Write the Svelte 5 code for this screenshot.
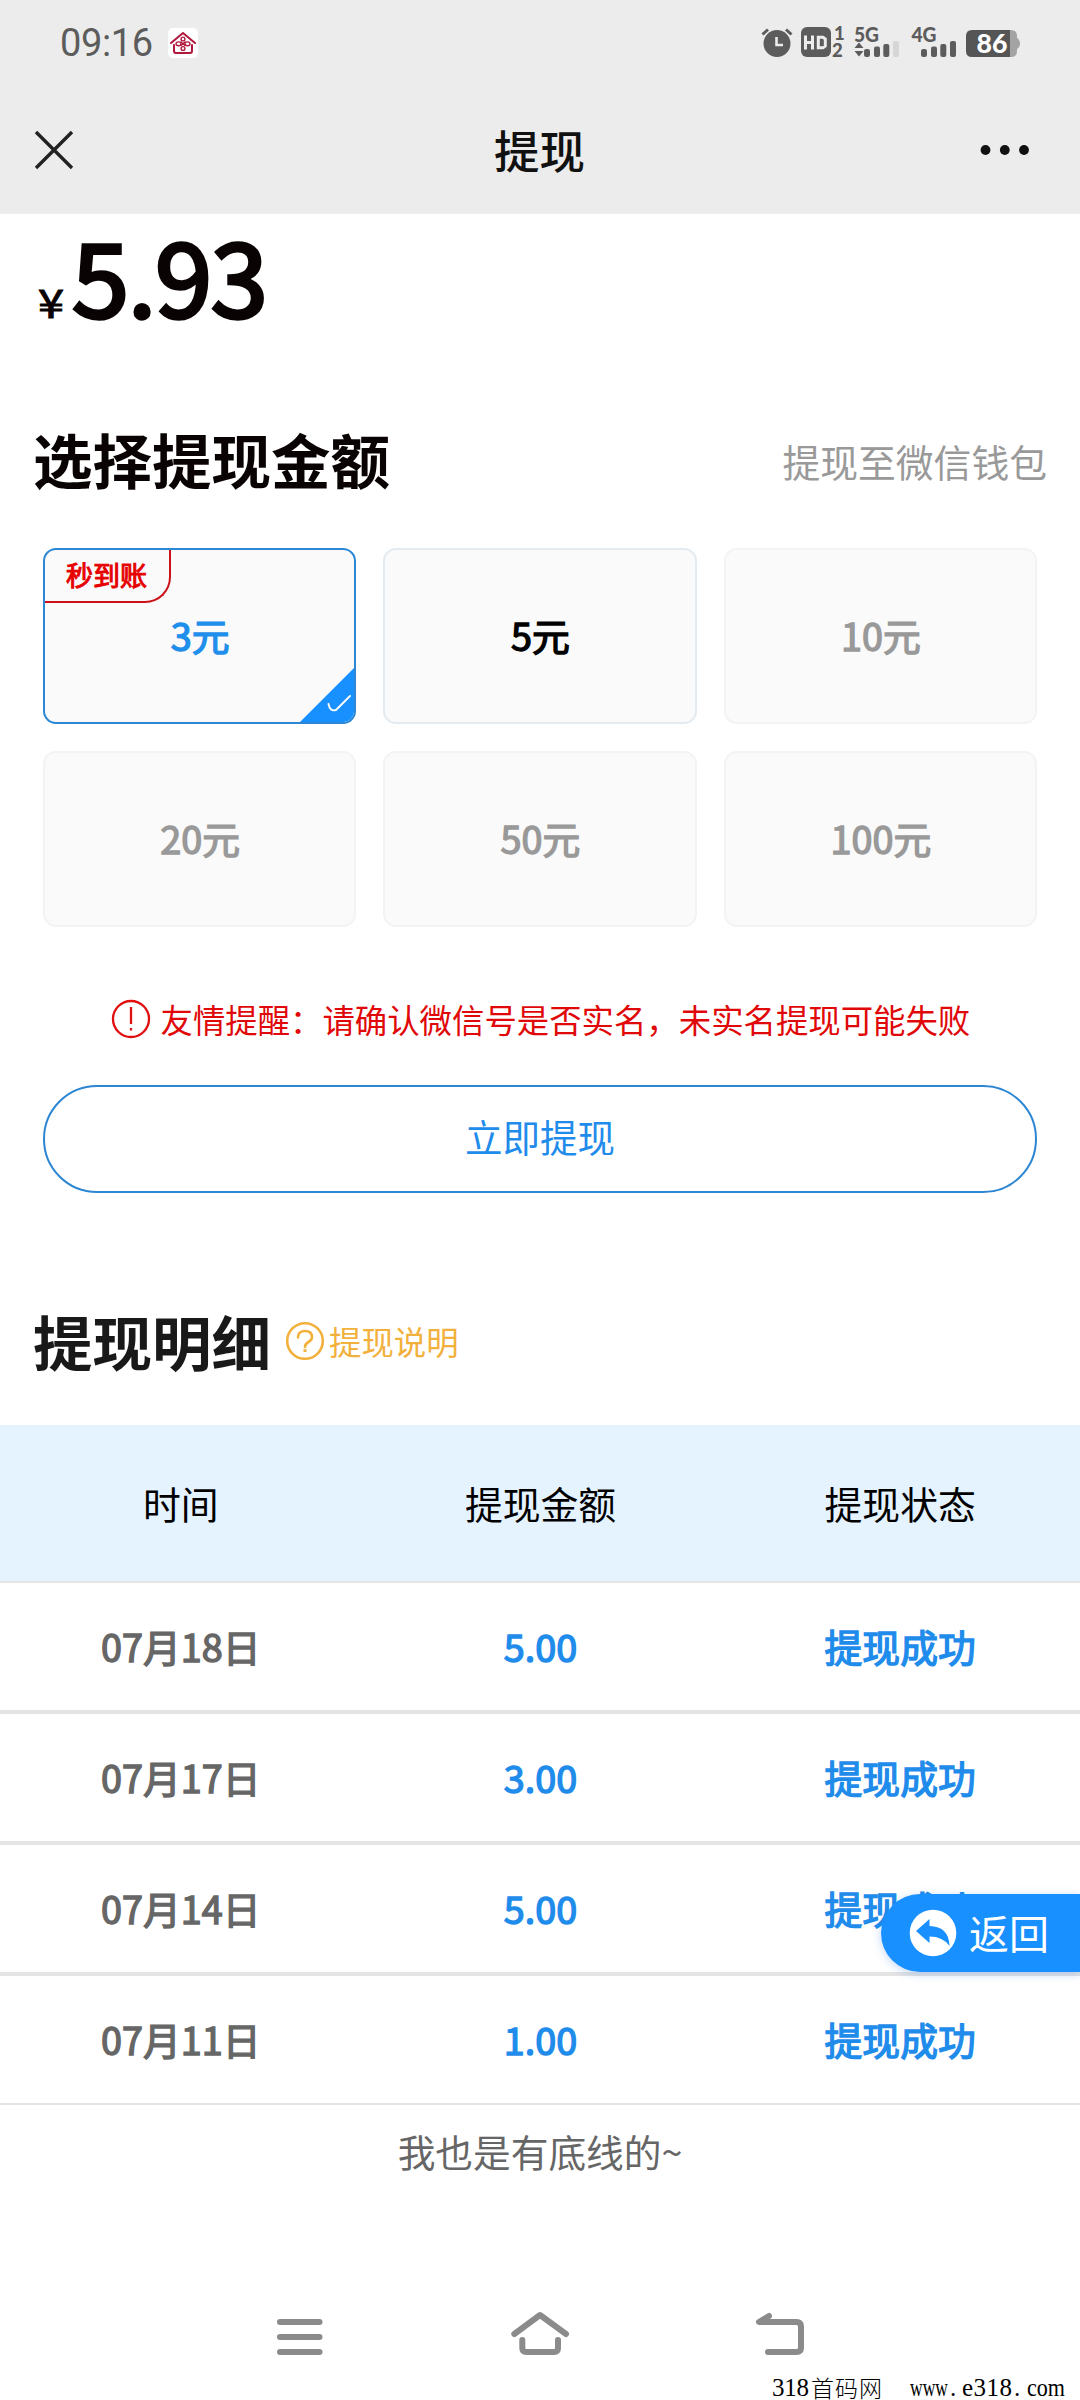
<script>
  const amounts = [
    { label: '3元', state: 'selected', badge: '秒到账' },
    { label: '5元', state: 'open' },
    { label: '10元', state: 'off' },
    { label: '20元', state: 'off' },
    { label: '50元', state: 'off' },
    { label: '100元', state: 'off' }
  ];
  const records = [
    { date: '07月18日', amount: '5.00', status: '提现成功' },
    { date: '07月17日', amount: '3.00', status: '提现成功' },
    { date: '07月14日', amount: '5.00', status: '提现成功' },
    { date: '07月11日', amount: '1.00', status: '提现成功' }
  ];
</script>

<div class="screen">
  <header>
    <div class="status">
      <span class="clock">09:16</span>
      <svg class="app" width="32" height="32" viewBox="0 0 32 32">
        <rect x="1" y="1" width="30" height="30" rx="5" fill="#fff" />
        <g fill="none" stroke="#b0183c" stroke-width="2" stroke-linejoin="round" stroke-linecap="round">
          <path d="M4 16 L16 6 L28 16" />
          <path d="M7 18 V24 Q7 26 9 26 H23 Q25 26 25 24 V18" />
          <g stroke-width="1.4">
            <circle cx="16" cy="12" r="1.9" />
            <circle cx="16" cy="21.5" r="1.9" />
            <ellipse cx="11.5" cy="16.8" rx="2.5" ry="1.9" />
            <ellipse cx="20.5" cy="16.8" rx="2.5" ry="1.9" />
            <path d="M14 15 L18 18.6 M18 15 L14 18.6" />
          </g>
        </g>
      </svg>
      <svg class="sys" width="262" height="46" viewBox="760 20 262 46">
        <g fill="#5c5c5c">
          <circle cx="777" cy="43.5" r="13.5" />
          <path d="M762.5 34.5 L768 29.5 M791.5 34.5 L786 29.5" stroke="#5c5c5c" stroke-width="3" />
          <path d="M776.5 37 V45 H783" fill="none" stroke="#ececec" stroke-width="2.6" />
          <rect x="801" y="27" width="30" height="30" rx="6" />
          <path d="M805.5 35.5 V49.500 M812.5 35.500 V49.500 M805.5 42.5 H812.5 M818.3 37.3 H823 L825.3 39 V46 L823 47.7 H818.3 Z" fill="none" stroke="#ececec" stroke-width="3" />
          <text x="834" y="40" class="g" font-size="18.5">1</text>
          <text x="832" y="56.5" class="g" font-size="18.5">2</text>
          <text x="854" y="41.8" class="g" font-size="20.5" textLength="25" lengthAdjust="spacingAndGlyphs">5G</text>
          <text x="911.5" y="41.8" class="g" font-size="20.5" textLength="25" lengthAdjust="spacingAndGlyphs">4G</text>
          <path d="M854.5 48 L859 42.5 L863.5 48 Z M854.5 51 H863.5 L859 56.5 Z" />
          <rect x="864" y="49" width="6" height="8" rx="2.2" />
          <rect x="874" y="46.5" width="6" height="10.5" rx="2" />
          <rect x="883.3" y="44" width="6" height="13" rx="2" />
          <rect x="893" y="41" width="6" height="16" rx="2" fill="#d6d6d6" />
          <rect x="921" y="49" width="6" height="8" rx="2.2" />
          <rect x="931" y="46.5" width="6" height="10.5" rx="2" />
          <rect x="940.3" y="44" width="6" height="13" rx="2" />
          <rect x="950" y="41" width="6" height="16" rx="2" />
          <path d="M1009 30 H1011 Q1017 30 1017 36 V38 Q1020 40 1020 43.5 Q1020 47 1017 49 V51 Q1017 57 1011 57 H1009 Z" fill="#a3a3a3" />
          <path d="M972 30 H1010 V57 H972 Q966 57 966 51 V36 Q966 30 972 30 Z" fill="#555" />
        </g>
        <text x="976.5" y="53" class="g" font-size="26.5" fill="#fff" textLength="31" lengthAdjust="spacingAndGlyphs">86</text>
      </svg>
    </div>
    <div class="bar">
      <svg width="40" height="40" viewBox="0 0 40 40"><path d="M2 2 L38 38 M38 2 L2 38" fill="none" stroke="#222" stroke-width="3.4" /></svg>
      <h1>提现</h1>
      <svg width="50" height="12" viewBox="0 0 50 12" fill="#111"><circle cx="5.5" cy="6" r="4.9" /><circle cx="24.8" cy="6" r="4.9" /><circle cx="44" cy="6" r="4.9" /></svg>
    </div>
  </header>

  <section class="balance"><span class="yen">¥</span><span class="num">5.93</span></section>

  <section class="title">
    <h2>选择提现金额</h2>
    <span class="to">提现至微信钱包</span>
  </section>

  <section class="grid">
    {#each amounts as a}
      <div class="card {a.state}">
        {a.label}
        {#if a.badge}<span class="badge">{a.badge}</span>{/if}
        {#if a.state === 'selected'}
          <svg class="tick" width="56" height="56" viewBox="0 0 56 56">
            <path d="M56 0 V56 H0 Z" fill="#1890ff" />
            <path d="M29.5 37 Q31 45 37 43 L51 29" fill="none" stroke="#fff" stroke-width="1.9" stroke-linecap="round" stroke-linejoin="round" />
          </svg>
        {/if}
      </div>
    {/each}
  </section>

  <p class="notice">
    <svg width="40" height="40" viewBox="0 0 40 40" fill="none" stroke="#e01010" stroke-width="2.3">
      <circle cx="20" cy="20" r="18" /><path d="M20 8 V25 M20 29 V31.5" />
    </svg>
    <span>友情提醒：请确认微信号是否实名，未实名提现可能失败</span>
  </p>

  <button>立即提现</button>

  <section class="detail">
    <h2>提现明细</h2>
    <svg width="40" height="40" viewBox="0 0 40 40" fill="none" stroke="#f2b13c" stroke-width="2.6">
      <circle cx="20" cy="20" r="17.8" />
      <path d="M13 16.5 Q13 10 20 10 Q27 10 27 16 Q27 19 23.5 21 Q20 23 20 26" stroke-linecap="round" /><path d="M20 28.2 V31" stroke-width="3" />
    </svg>
    <span>提现说明</span>
  </section>

  <div class="table">
    <div class="row head"><span>时间</span><span>提现金额</span><span>提现状态</span></div>
    {#each records as r}
      <div class="row"><span class="date">{r.date}</span><span>{r.amount}</span><span>{r.status}</span></div>
    {/each}
  </div>

  <p class="end">我也是有底线的~</p>

  <nav>
    <svg width="60" height="50" viewBox="270 2308 60 50"><path d="M280 2322 H319.5 M280 2337 H319.5 M280 2352 H319.5" /></svg>
    <svg width="64" height="50" viewBox="508 2308 64 50"><path d="M514.3 2334 L540 2315 L566 2334 M522.3 2340 V2348 Q522.3 2352 526.5 2352 H554 Q558 2352 558 2348 V2340" /></svg>
    <svg width="60" height="50" viewBox="750 2308 60 50"><path d="M769 2316 L759 2322 H796.5 Q801 2322 801 2326.5 V2347.5 Q801 2352 796.5 2352 H768" /></svg>
  </nav>

  <div class="back">
    <svg width="48" height="48" viewBox="0 0 48 48">
      <circle cx="24" cy="24" r="23.3" fill="#fff" />
      <path d="M7 22 L20.5 10 V17 Q40 17.5 40.5 37 Q34 27.5 20.5 27.5 V34 Z" fill="#1890ff" />
    </svg>
    <span>返回</span>
  </div>

  <svg class="mark" width="300" height="34" viewBox="770 2366 300 34">
    <text x="772" y="2396" textLength="37">318</text>
    <text x="811" y="2397" class="cn" textLength="71">首码网</text>
    <text x="910" y="2396" textLength="38" lengthAdjust="spacingAndGlyphs">www</text>
    <text x="950" y="2396">.</text>
    <text x="962" y="2396" textLength="50">e318</text>
    <text x="1014" y="2396">.</text>
    <text x="1027" y="2396" textLength="38" lengthAdjust="spacingAndGlyphs">com</text>
  </svg>
</div>

<style>
  :global(body) { margin: 0; background: #fff; }
  .screen {
    position: relative;
    box-sizing: border-box;
    width: 1080px;
    height: 2400px;
    overflow: hidden;
    background: #fff;
    font-family: 'Noto Sans CJK SC', sans-serif;
    color: #000;
  }
  h1, h2, p { margin: 0; }
  svg { display: block; flex: none; overflow: visible; }
  header { height: 214px; background: #ececec; border-bottom: 1px solid #f0f0f0; box-sizing: border-box; }
  .status { display: flex; align-items: center; height: 86px; padding: 0 58px 0 60px; }
  .clock { font: 400 38px/40px Roboto, sans-serif; color: #5c5c5c; width: 107px; letter-spacing: -0.4px; }
  .sys { margin-left: auto; }
  .g { font-family: Lato, Roboto, sans-serif; font-weight: 900; }
  .bar { display: flex; align-items: center; justify-content: space-between; height: 128px; padding: 0 50px 0 34px; }
  .bar h1 { font-size: 45.5px; font-weight: 500; line-height: 60px; color: #111; margin-left: 25px; padding-bottom: 3px; }
  .balance { display: flex; align-items: baseline; height: 160px; padding-left: 38px; line-height: 120px; color: #0a0303; }
  .yen { font-size: 39px; font-weight: 400; width: 34px; -webkit-text-stroke: 1px currentColor; transform: scaleX(1.2); transform-origin: left; }
  .num { font-size: 103px; font-weight: 400; letter-spacing: -1.4px; -webkit-text-stroke: 3.6px currentColor; }
  .title { display: flex; align-items: center; justify-content: space-between; height: 174px; padding: 0 33px 6px; box-sizing: border-box; }
  h2 { font-size: 59.5px; font-weight: 700; line-height: 80px; color: #0a0303; }
  .to { font-size: 37.8px; color: #999; padding-top: 4px; }
  .grid { display: grid; grid-template-columns: repeat(3, 1fr); grid-auto-rows: 176px; gap: 27px; padding: 0 43px; }
  .card {
    position: relative;
    display: flex;
    align-items: center;
    justify-content: center;
    box-sizing: border-box;
    padding: 0 0 3px 1px;
    border: 2px solid #f3f3f3;
    border-radius: 13px;
    background: #fafafa;
    font-size: 37.8px;
    -webkit-text-stroke: 1.4px currentColor;
    color: #999;
    overflow: hidden;
  }
  .card.selected { border-color: #2c88d5; color: #1f8feb; }
  .card.open { border-color: #e4ebf0; color: #000; }
  .badge {
    position: absolute;
    left: 0;
    top: 0;
    box-sizing: border-box;
    width: 126px;
    height: 53px;
    border: solid #cc1018;
    border-width: 0 2px 2px 0;
    border-radius: 0 0 26px 0;
    font-size: 27px;
    line-height: 50px;
    padding-left: 21px;
    color: #e60000;
    -webkit-text-stroke-width: 1px;
  }
  .tick { position: absolute; right: -1px; bottom: -1px; }
  .notice { display: flex; align-items: center; gap: 9.5px; height: 40px; padding-left: 111px; margin-top: 72px; font-size: 32.4px; color: #e00808; white-space: nowrap; }
  .notice span { padding-bottom: 1px; }
  button {
    display: block;
    box-sizing: border-box;
    width: 994px;
    height: 108px;
    margin: 46px 43px 0;
    padding: 0 0 8px;
    border: 2px solid #2c86d2;
    border-radius: 54px;
    background: #fff;
    font: 400 37.5px 'Noto Sans CJK SC', sans-serif;
    color: #1f8ceb;
  }
  .detail { display: flex; align-items: center; height: 232px; padding: 64px 0 0 33px; box-sizing: border-box; color: #f2b13c; font-size: 32.4px; }
  .detail h2 { color: #191919; margin-right: 14px; padding-bottom: 3px; }
  .detail span { margin-left: 4px; padding-bottom: 2px; }
  .row {
    display: grid;
    grid-template-columns: repeat(3, 1fr);
    align-items: center;
    text-align: center;
    height: 131px;
    box-sizing: border-box;
    border: solid #e4e4e4;
    border-width: 2px 0;
    padding: 0 0 2px 1px;
    font-size: 37.8px;
    -webkit-text-stroke: 1.4px currentColor;
    color: #1f8ceb;
  }
  .row.head { height: 156px; border: 0; background: #e5f3ff; -webkit-text-stroke: 0; color: #000; }
  .date { color: #666; }
  .end { padding-top: 18px; height: 62px; line-height: 56px; text-align: center; font-size: 37.7px; color: #666; }
  nav { display: flex; justify-content: space-between; padding: 0 270px; margin-top: 123px; }
  nav path { fill: none; stroke: #8b8b8b; stroke-width: 6; stroke-linecap: round; stroke-linejoin: round; }
  .back {
    position: absolute;
    right: 0;
    top: 1894px;
    display: flex;
    align-items: center;
    box-sizing: border-box;
    width: 199px;
    height: 78px;
    padding-left: 28px;
    gap: 12px;
    border-radius: 39px 0 0 39px;
    background: #1890ff;
    box-shadow: 0 2px 10px rgba(24, 100, 220, 0.25);
    color: #fff;
    font-size: 40px;
  }
  .back span { padding-bottom: 2px; }
  .mark { position: absolute; right: 10px; bottom: 0; font: 25px 'Liberation Serif', serif; }
  .cn { font: 300 23px 'Noto Sans CJK SC', sans-serif; }
</style>
